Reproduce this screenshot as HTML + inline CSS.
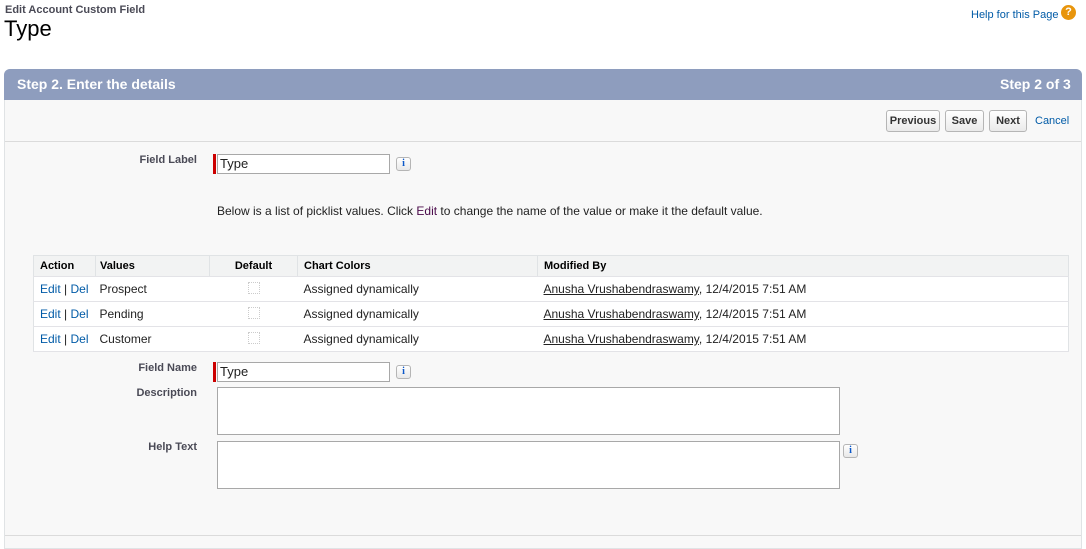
<!DOCTYPE html>
<html><head><style>
*{margin:0;padding:0;box-sizing:border-box}
body{width:1086px;height:545px;background:#fff;font-family:"Liberation Sans",Arial,sans-serif;font-size:12px;color:#222;position:relative;overflow:hidden}
.a{position:absolute}
.lbl{font-weight:bold;color:#4a4a56;font-size:11px;text-align:right;width:120px}
.inp{background:#fff;border:1px solid #a8a8a8;height:20px;font-size:13px;padding-left:2px;line-height:18px}
.req{width:3px;background:#c00;height:20px}
.info{width:15px;height:14px;border:1px solid #b5b5b5;border-radius:3px;background:linear-gradient(#fff,#e8e8e8);color:#0b58c9;font:bold 10px "Liberation Serif",serif;text-align:center;line-height:12px}
.btn{height:22px;border:1px solid #b5b5b5;border-radius:3px;background:linear-gradient(#fff,#eaeaea);font-weight:bold;font-size:11px;color:#333;text-align:center;line-height:20px}
table{border-collapse:collapse;font-size:12px}
td,th{height:25px;padding-left:6px;text-align:left;border-bottom:1px solid #e3e3e7}
td:nth-child(2),th:nth-child(2){padding-left:4px}
th{font-size:11px;height:21px;background:#f2f3f3;border-left:1px solid #e0e3e5;color:#000}
th:first-child{border-left:none}
td{background:#fff}
a{color:#015ba7;text-decoration:none}
.u{text-decoration:underline;color:#222}
.cb{display:inline-block;width:12px;height:12px;border:1px dotted #ccc}
</style></head><body>
<div class="a" style="left:5px;top:4px;font-size:11px;font-weight:bold;color:#4a4a56">Edit Account Custom Field</div>
<div class="a" style="left:4px;top:16px;font-size:22px;color:#000">Type</div>
<div class="a" style="left:971px;top:9px;font-size:11px;color:#015ba7">Help for this Page</div>
<div class="a" style="left:1061px;top:5px;width:15px;height:15px;border-radius:50%;background:#e8950c;color:#fff;font-weight:bold;font-size:11px;text-align:center;line-height:15px">?</div>

<div class="a" style="left:4px;top:69px;width:1078px;height:480px;background:#f8f8f8;border:1px solid #e0e3e5;border-radius:6px 6px 0 0"></div>
<div class="a" style="left:4px;top:69px;width:1078px;height:31px;background:#8e9dbe;border-radius:6px 6px 0 0"></div>
<div class="a" style="left:17px;top:76px;color:#fff;font-weight:bold;font-size:14px">Step 2. Enter the details</div>
<div class="a" style="left:1000px;top:76px;color:#fff;font-weight:bold;font-size:14px">Step 2 of 3</div>
<div class="a" style="left:5px;top:141px;width:1076px;height:1px;background:#dbdbdb"></div>
<div class="a" style="left:5px;top:535px;width:1076px;height:1px;background:#dbdbdb"></div>

<div class="a btn" style="left:886px;top:110px;width:54px">Previous</div>
<div class="a btn" style="left:945px;top:110px;width:39px">Save</div>
<div class="a btn" style="left:989px;top:110px;width:38px">Next</div>
<div class="a" style="left:1035px;top:115px;font-size:11px;color:#015ba7">Cancel</div>

<div class="a lbl" style="left:77px;top:154px">Field Label</div>
<div class="a req" style="left:213px;top:154px"></div>
<div class="a inp" style="left:217px;top:154px;width:173px">Type</div>
<div class="a info" style="left:396px;top:157px">i</div>

<div class="a" style="left:217px;top:204px">Below is a list of picklist values. Click <span style="color:#4a0a4a">Edit</span> to change the name of the value or make it the default value.</div>

<table class="a" style="left:33px;top:255px;width:1036px;border:1px solid #e0e3e5">
<tr><th style="width:62px">Action</th><th style="width:114px">Values</th><th style="width:88px;text-align:center;padding:0">Default</th><th style="width:240px">Chart Colors</th><th>Modified By</th></tr>
<tr><td><a>Edit</a> | <a>Del</a></td><td>Prospect</td><td style="text-align:center;padding:0"><span class="cb"></span></td><td>Assigned dynamically</td><td><span class="u">Anusha Vrushabendraswamy</span>, 12/4/2015 7:51 AM</td></tr>
<tr><td><a>Edit</a> | <a>Del</a></td><td>Pending</td><td style="text-align:center;padding:0"><span class="cb"></span></td><td>Assigned dynamically</td><td><span class="u">Anusha Vrushabendraswamy</span>, 12/4/2015 7:51 AM</td></tr>
<tr><td><a>Edit</a> | <a>Del</a></td><td>Customer</td><td style="text-align:center;padding:0"><span class="cb"></span></td><td>Assigned dynamically</td><td><span class="u">Anusha Vrushabendraswamy</span>, 12/4/2015 7:51 AM</td></tr>
</table>

<div class="a lbl" style="left:77px;top:362px">Field Name</div>
<div class="a req" style="left:213px;top:362px"></div>
<div class="a inp" style="left:217px;top:362px;width:173px">Type</div>
<div class="a info" style="left:396px;top:365px">i</div>

<div class="a lbl" style="left:77px;top:387px">Description</div>
<div class="a inp" style="left:217px;top:387px;width:623px;height:48px"></div>
<div class="a lbl" style="left:77px;top:441px">Help Text</div>
<div class="a inp" style="left:217px;top:441px;width:623px;height:48px"></div>
<div class="a info" style="left:843px;top:444px">i</div>
</body></html>
